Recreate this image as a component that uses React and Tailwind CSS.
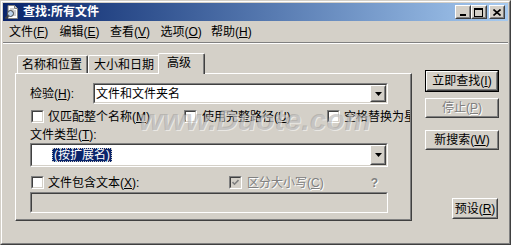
import React from "react";

const U = ({ children }) => <span className="underline underline-offset-[1px]">{children}</span>;

function Raised({ className = "", children }) {
  return (
    <div className={"border border-t-white border-l-white border-r-[#404040] border-b-[#404040] " + className}>
      <div className="w-full h-full border border-transparent border-r-[#808080] border-b-[#808080] flex items-center justify-center">
        {children}
      </div>
    </div>
  );
}

function Sunken({ className = "", inner = "bg-white", children }) {
  return (
    <div className={"border border-t-[#808080] border-l-[#808080] border-r-white border-b-white " + className}>
      <div className={"w-full h-full border border-t-[#404040] border-l-[#404040] border-r-[#d4d0c8] border-b-[#d4d0c8] " + inner}>
        {children}
      </div>
    </div>
  );
}

function Check({ checked, disabled }) {
  return (
    <Sunken
      className="w-[13px] h-[13px] shrink-0"
      inner={disabled ? "bg-[#d4d0c8] flex items-center justify-center" : "bg-white flex items-center justify-center"}
    >
      {checked && (
        <svg width="7" height="7" viewBox="0 0 7 7">
          <polyline points="0.5,3 2.5,5.2 6.5,1" fill="none" stroke={disabled ? "#808080" : "#000"} strokeWidth="1.6" />
        </svg>
      )}
    </Sunken>
  );
}

const Arrow = () => (
  <svg width="7" height="4" viewBox="0 0 7 4">
    <path d="M0 0h7L3.5 4z" fill="#000" />
  </svg>
);

function Combo({ className = "", children }) {
  return (
    <Sunken className={className} inner="bg-white flex items-stretch">
      <div className="flex-1 flex items-center overflow-hidden">{children}</div>
      <Raised className="w-[16px] bg-[#d4d0c8]">
        <Arrow />
      </Raised>
    </Sunken>
  );
}

const etched = "text-[#808080] [text-shadow:1px_1px_0_#fff]";

function Tab({ className = "", children }) {
  return (
    <div className={"h-[18px] border border-b-0 border-t-white border-l-white border-r-[#404040] rounded-t-[2px] " + className}>
      <div className="h-full border-r border-[#808080] flex items-center">{children}</div>
    </div>
  );
}

export default function App() {
  return (
    <div className="w-[511px] h-[245px] overflow-hidden relative bg-[#d4d0c8] text-black text-[12px] leading-[14px] font-['Liberation_Sans','Noto_Sans_CJK_SC',sans-serif] border border-t-[#d4d0c8] border-l-[#d4d0c8] border-r-[#404040] border-b-[#404040]">
      <div className="h-full border border-t-white border-l-white border-r-[#808080] border-b-[#808080] p-[1px] flex flex-col">
        {/* title bar */}
        <div className="h-[18px] shrink-0 flex items-center bg-linear-to-r from-[#0a246a] to-[#a6caf0] pl-[1px] pr-[3px]">
          <svg width="16" height="16" viewBox="0 0 16 16">
            <path d="M4 1.5h6.5l3 3v10H4z" fill="#fff" stroke="#808080" />
            <path d="M10.5 1.5v3h3" fill="#d4d0c8" stroke="#808080" />
            <path d="M6 5h4M6 7h6M9 9h3M9 11h3" stroke="#a0a0a0" />
            <circle cx="6.5" cy="9.5" r="3" fill="#bcd4ee" stroke="#404040" />
            <path d="M4.3 11.8L1.5 14.6" stroke="#404040" strokeWidth="2" />
          </svg>
          <span className="ml-[3px] text-white font-bold">查找:所有文件</span>
          <div className="ml-auto flex items-center">
            <Raised className="w-[16px] h-[14px] bg-[#d4d0c8]">
              <div className="w-[6px] h-[2px] bg-black mt-[6px] -ml-[1px]" />
            </Raised>
            <Raised className="w-[16px] h-[14px] bg-[#d4d0c8]">
              <div className="w-[9px] h-[9px] border border-t-2 border-black -ml-[1px]" />
            </Raised>
            <Raised className="w-[16px] h-[14px] ml-[2px] bg-[#d4d0c8]">
              <svg width="8" height="7" viewBox="0 0 8 7" className="-ml-[1px]">
                <path d="M0.5 0.5l7 6M7.5 0.5l-7 6" stroke="#000" strokeWidth="1.6" />
              </svg>
            </Raised>
          </div>
        </div>

        {/* menu bar */}
        <div className="h-[21px] shrink-0 flex items-center pl-[6px]">
          <span className="w-[50.5px]">文件(<U>F</U>)</span>
          <span className="w-[50.5px]">编辑(<U>E</U>)</span>
          <span className="w-[50.5px]">查看(<U>V</U>)</span>
          <span className="w-[50.5px]">选项(<U>O</U>)</span>
          <span className="w-[50.5px]">帮助(<U>H</U>)</span>
        </div>
        <div className="h-[2px] shrink-0 border-t border-b border-t-[#808080] border-b-white" />

        {/* body */}
        <div className="flex">
          <div className="ml-[12px] pt-[9px] w-[397px]">
            <div className="flex items-end h-[20px] pl-[2px]">
              <Tab className="w-[71px]">
                <span className="pl-[4px]">名称和位置</span>
              </Tab>
              <Tab className="w-[72px]">
                <span className="pl-[5px]">大小和日期</span>
              </Tab>
              <div className="relative z-10 -ml-[2px] -mb-[1px] w-[47px] h-[21px] bg-[#d4d0c8] border border-b-0 border-t-white border-l-white border-r-[#404040] rounded-t-[2px]">
                <div className="h-full border-r border-[#808080] flex items-center pl-[8px] pb-[3px]">高级</div>
              </div>
            </div>

            <div className="h-[148px] border border-t-white border-l-white border-r-[#404040] border-b-[#404040]">
              <div className="h-full border-r border-b border-[#808080] pl-[14px] pt-[9px] overflow-hidden">
                <div className="flex items-center h-[21px]">
                  <span className="w-[63px]">检验(<U>H</U>):</span>
                  <Combo className="w-[295px] h-[21px]">
                    <span className="pl-[1px] whitespace-nowrap">文件和文件夹名</span>
                  </Combo>
                </div>

                <div className="flex items-center h-[13px] mt-[6px] ml-[1px] whitespace-nowrap">
                  <div className="w-[153px] shrink-0 flex items-center gap-[4px]">
                    <Check />
                    <span>仅匹配整个名称(<U>M</U>)</span>
                  </div>
                  <div className="w-[143px] shrink-0 flex items-center gap-[5px]">
                    <Check />
                    <span>使用完整路径(<U>U</U>)</span>
                  </div>
                  <div className="shrink-0 flex items-center gap-[4px]">
                    <Check />
                    <span>空格替换为星号</span>
                  </div>
                </div>

                <div className="mt-[5px] h-[14px]">文件类型(<U>T</U>):</div>

                <Combo className="mt-[1px] w-[358px] h-[24px]">
                  <span className="ml-[20px] px-[1px] h-[14px] leading-[12px] bg-[#0a246a] text-white border border-dotted border-[#d4d0c8] whitespace-nowrap">
                    (按扩展名)
                  </span>
                </Combo>

                <div className="mt-[9px] h-[13px] w-[358px] ml-[1px] flex items-center whitespace-nowrap">
                  <div className="w-[198px] shrink-0 flex items-center gap-[4px]">
                    <Check />
                    <span>文件包含文本(<U>X</U>):</span>
                  </div>
                  <div className="flex items-center gap-[5px]">
                    <Check checked disabled />
                    <span className={etched}>区分大小写(<U>C</U>)</span>
                  </div>
                  <span className={"ml-auto mr-[11px] font-bold " + etched}>?</span>
                </div>

                <Sunken className="mt-[3px] w-[358px] h-[21px]" inner="bg-[#d4d0c8]" />
              </div>
            </div>
          </div>

          <div className="ml-[13px] mt-[26px] w-[74px] flex flex-col">
            <div className="h-[22px] border border-black">
              <Raised className="h-full bg-[#d4d0c8]">
                <span>立即查找(<U>I</U>)</span>
              </Raised>
            </div>
            <Raised className="mt-[6px] h-[20px]">
              <span className={etched}>停止(<U>P</U>)</span>
            </Raised>
            <Raised className="mt-[12px] h-[20px]">
              <span>新搜索(<U>W</U>)</span>
            </Raised>
            <Raised className="mt-[48px] ml-auto mr-[1px] w-[46px] h-[21px]">
              <span>预设(<U>R</U>)</span>
            </Raised>
          </div>
        </div>
      </div>

      {/* watermark */}
      <div className="absolute left-[138px] top-[104px] pointer-events-none text-[30px] leading-none italic font-bold text-[#8c8c8c]/40 [text-shadow:1px_1px_0_rgba(255,255,255,0.5)] font-['Liberation_Sans',sans-serif]">
        www.Duote.com
      </div>
    </div>
  );
}
